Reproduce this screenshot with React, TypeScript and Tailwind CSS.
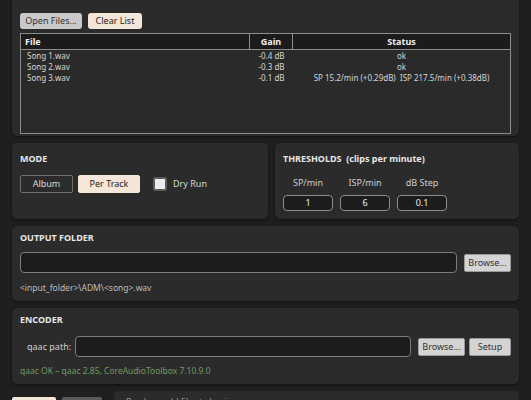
import { useState } from "react";

const files = [
  { name: "Song 1.wav", gain: "-0.4 dB", status: "ok" },
  { name: "Song 2.wav", gain: "-0.3 dB", status: "ok" },
  { name: "Song 3.wav", gain: "-0.1 dB", status: "SP 15.2/min (+0.29dB)  ISP 217.5/min (+0.38dB)" },
];

const thresholds = [
  { label: "SP/min", value: "1" },
  { label: "ISP/min", value: "6" },
  { label: "dB Step", value: "0.1" },
];

function Panel({ className = "", children }: { className?: string; children: React.ReactNode }) {
  return (
    <section className={`rounded-[5px] bg-[#2b2b2b] px-2 shadow-[0_1px_3px_rgba(0,0,0,0.5)] ${className}`}>
      {children}
    </section>
  );
}

function Title({ children }: { children: React.ReactNode }) {
  return <h2 className="h-3 text-[9px] leading-3 font-bold text-[#e6e6e6]">{children}</h2>;
}

function GrayButton({ label, className = "" }: { label: string; className?: string }) {
  return (
    <button className={`h-[18px] rounded-[2px] border border-[#9a9a9a] bg-[#d4d4d4] text-[9px] text-[#333] ${className}`}>
      {label}
    </button>
  );
}

export default function App() {
  const [mode, setMode] = useState("track");

  return (
    <div
      className="min-h-screen overflow-hidden bg-[#1f1f1f] pr-3 pl-3 text-[#d8d8d8]"
      style={{ fontFamily: '"Noto Sans", "Open Sans", sans-serif' }}
    >
      <div className="-mt-5 flex flex-col gap-[7px]">
        {/* files */}
        <Panel className="pt-[10px] pb-[2px]">
          <Title>FILES</Title>
          <div className="mt-[11px] flex gap-[6px]">
            <button className="h-4 w-[62px] rounded-[3px] bg-[#c9c9c9] text-[9px] text-[#333]">Open Files...</button>
            <button className="h-4 w-[54px] rounded-[3px] bg-[#f4e6d8] text-[9px] text-[#222]">Clear List</button>
          </div>
          <div className="mt-1 h-[101px] border border-[#8c8c8c] bg-[#2a2a2a]">
            <div className="flex h-4 border-b border-[#8c8c8c] bg-[#1b1b1b] text-[9px] leading-[15px] font-bold text-[#eee]">
              <div className="w-[229px] border-r border-[#8c8c8c] pl-1">File</div>
              <div className="w-[43px] border-r border-[#8c8c8c] text-center">Gain</div>
              <div className="flex-1 text-center">Status</div>
            </div>
            <div className="text-[8px] leading-[11px] text-[#d6d6d6]">
              {files.map((f) => (
                <div key={f.name} className="flex">
                  <div className="w-[229px] pl-[6px]">{f.name}</div>
                  <div className="w-[43px] text-center">{f.gain}</div>
                  <div className="flex-1 text-center whitespace-pre">{f.status}</div>
                </div>
              ))}
            </div>
          </div>
        </Panel>

        {/* mode + thresholds */}
        <div className="flex gap-[7px]">
          <Panel className="h-[76px] w-[256px] pt-[10px]">
            <Title>MODE</Title>
            <div className="mt-[10px] flex items-center">
              <button
                onClick={() => setMode("album")}
                className={`h-[18px] w-[53px] rounded-[2px] border text-[9px] ${
                  mode === "album" ? "border-[#f4e6d8] bg-[#f4e6d8] text-[#222]" : "border-[#6e6e6e] bg-[#2b2b2b] text-[#d8d8d8]"
                }`}
              >
                Album
              </button>
              <button
                onClick={() => setMode("track")}
                className={`ml-[5px] h-[18px] w-[62px] rounded-[2px] border text-[9px] ${
                  mode === "track" ? "border-[#f4e6d8] bg-[#f4e6d8] text-[#222]" : "border-[#6e6e6e] bg-[#2b2b2b] text-[#d8d8d8]"
                }`}
              >
                Per Track
              </button>
              <label className="ml-[13px] flex items-center gap-[6px] text-[9px] text-[#d8d8d8]">
                <span className="h-[14px] w-[14px] rounded-[2px] border-2 border-[#5c5c5c] bg-[#ececec]" />
                Dry Run
              </label>
            </div>
          </Panel>
          <Panel className="h-[76px] flex-1 pt-[10px]">
            <Title>THRESHOLDS&nbsp; (clips per minute)</Title>
            <div className="mt-[12px] flex gap-[7px]">
              {thresholds.map((t) => (
                <div key={t.label} className="flex w-[50px] flex-col items-center">
                  <span className="text-[9px] leading-3 text-[#cfcfcf]">{t.label}</span>
                  <div className="mt-[6px] h-4 w-[50px] rounded-[4px] border border-[#8c8c8c] bg-[#1c1c1c] text-center text-[9px] leading-[14px] text-[#eee]">
                    {t.value}
                  </div>
                </div>
              ))}
            </div>
          </Panel>
        </div>

        {/* output folder */}
        <Panel className="pt-[6px] pb-[7px]">
          <Title>OUTPUT FOLDER</Title>
          <div className="mt-[8px] flex items-center gap-[7px]">
            <div className="h-[21px] flex-1 rounded-[4px] border border-[#7c7c7c] bg-[#1c1c1c]" />
            <GrayButton label="Browse..." className="w-[47px]" />
          </div>
          <p className="mt-[9px] text-[8.5px] leading-3 text-[#bdbdbd]">&lt;input_folder&gt;\ADM\&lt;song&gt;.wav</p>
        </Panel>

        {/* encoder */}
        <Panel className="pt-[6px] pb-[7px]">
          <Title>ENCODER</Title>
          <div className="mt-[10px] flex items-center">
            <span className="w-[55px] pl-[7px] text-[9px] text-[#cfcfcf]">qaac path:</span>
            <div className="h-[21px] flex-1 rounded-[4px] border border-[#7c7c7c] bg-[#1c1c1c]" />
            <GrayButton label="Browse..." className="ml-[7px] w-[47px]" />
            <GrayButton label="Setup" className="ml-[4px] w-[42px]" />
          </div>
          <p className="mt-[8px] text-[8.5px] leading-3 text-[#6f9a62]">qaac OK – qaac 2.85, CoreAudioToolbox 7.10.9.0</p>
        </Panel>

        {/* actions */}
        <div className="flex items-start gap-[6px]">
          <button className="mt-[6px] h-[20px] w-[44px] rounded-[2px] bg-[#f4e6d8] text-[9px] text-[#222]">Run</button>
          <button className="mt-[6px] h-[20px] w-[40px] rounded-[2px] bg-[#5a5a5a] text-[9px] text-[#ccc]">Stop</button>
          <div className="ml-[6px] h-[40px] flex-1 rounded-[5px] bg-[#2b2b2b] px-3 pt-[5px] text-[8.5px] text-[#9a9a9a]">
            Ready — add files to begin.
          </div>
        </div>
      </div>
    </div>
  );
}
